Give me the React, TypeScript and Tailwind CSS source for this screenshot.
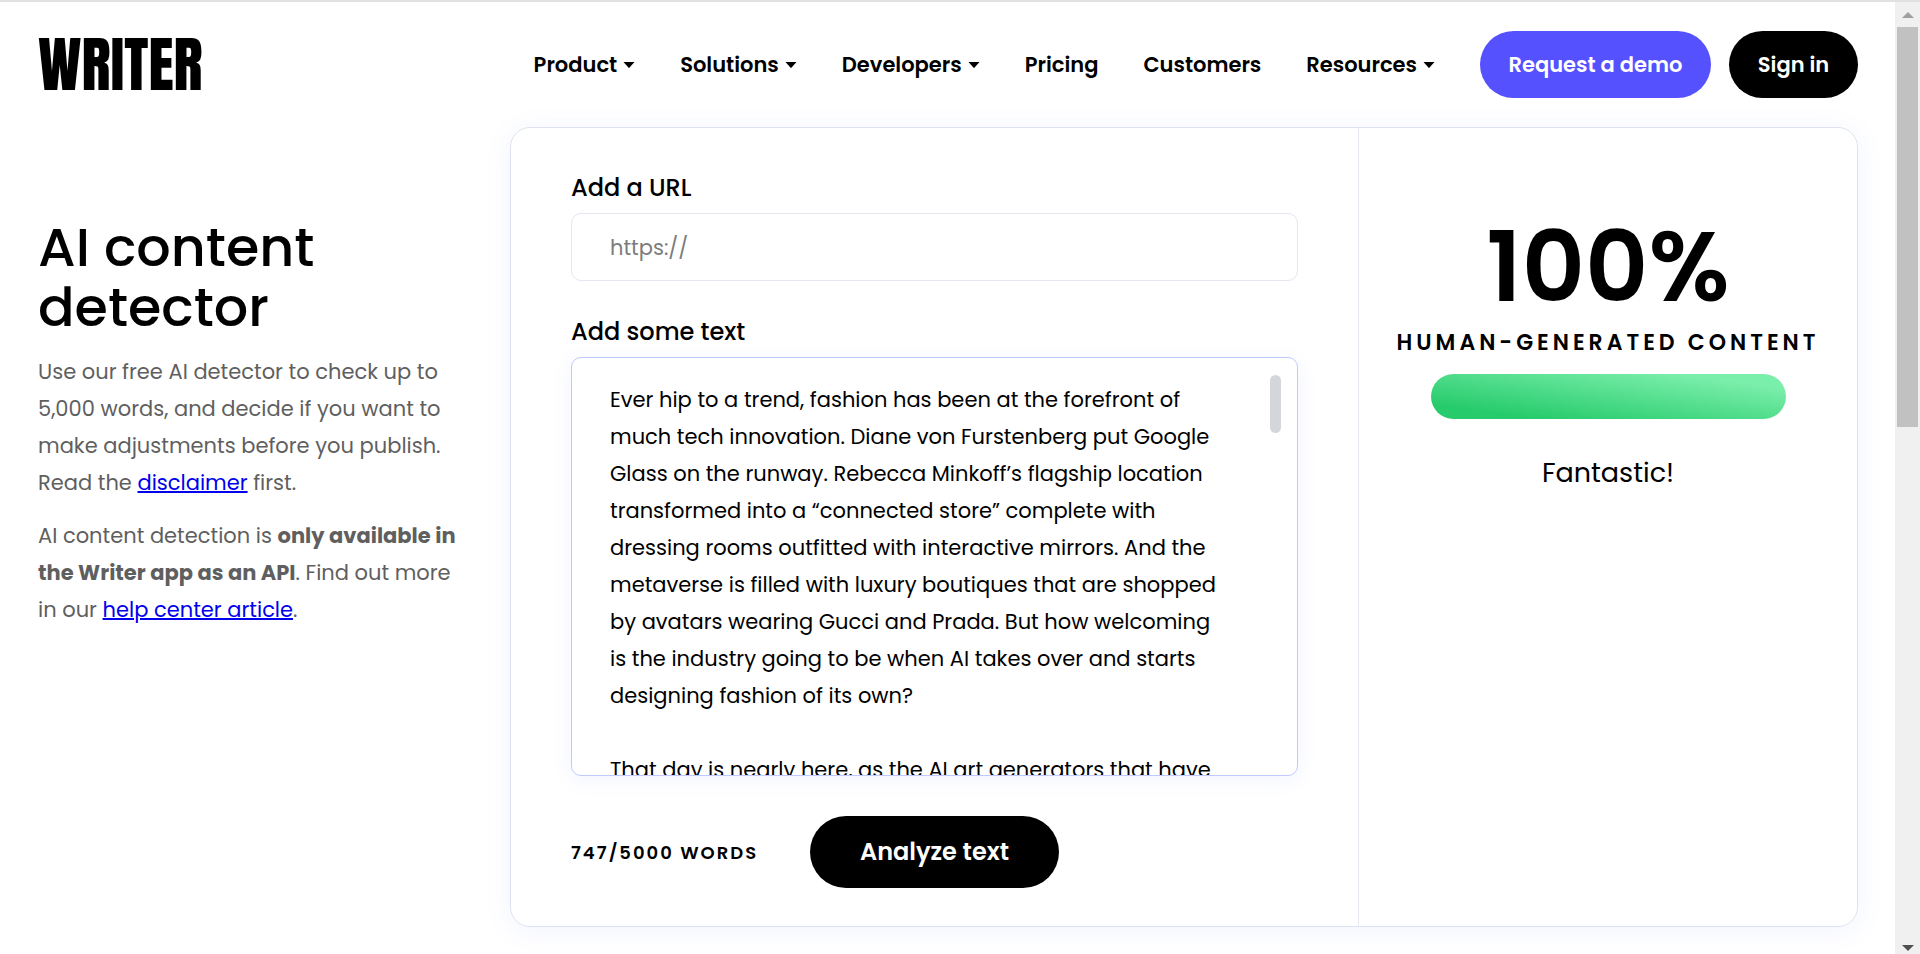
import { useState } from "react";

const navLinks = [
  { label: "Product", menu: true },
  { label: "Solutions", menu: true },
  { label: "Developers", menu: true },
  { label: "Pricing", menu: false },
  { label: "Customers", menu: false },
  { label: "Resources", menu: true },
];

const sampleText = [
  "Ever hip to a trend, fashion has been at the forefront of",
  "much tech innovation. Diane von Furstenberg put Google",
  "Glass on the runway. Rebecca Minkoff’s flagship location",
  "transformed into a “connected store” complete with",
  "dressing rooms outfitted with interactive mirrors. And the",
  "metaverse is filled with luxury boutiques that are shopped",
  "by avatars wearing Gucci and Prada. But how welcoming",
  "is the industry going to be when AI takes over and starts",
  "designing fashion of its own?",
  "",
  "That day is nearly here, as the AI art generators that have",
].join("\n");

function Caret() {
  return (
    <svg width="12" height="6" viewBox="0 0 12 6" aria-hidden="true">
      <path d="M0.5 0h11L6.6 5.6a0.8 0.8 0 0 1-1.2 0z" fill="currentColor" />
    </svg>
  );
}

function Header() {
  return (
    <header className="flex items-center justify-between pt-[29px]">
      <a
        href="#"
        className="font-['Anton','Roboto',sans-serif] text-[61px] leading-[67px] font-normal"
      >
        WRITER
      </a>
      <div className="flex items-center">
        <nav className="flex items-center gap-[45px] pr-[45px] text-[21px] font-semibold">
          {navLinks.map((link) => (
            <a key={link.label} href="#" className="flex items-center gap-1.5">
              {link.label}
              {link.menu && <Caret />}
            </a>
          ))}
        </nav>
        <div className="flex gap-[18px] text-[21px] font-semibold text-white">
          <a
            href="#"
            className="flex h-[67px] w-[231px] items-center justify-center rounded-full bg-[#5551ff]"
          >
            Request a demo
          </a>
          <a
            href="#"
            className="flex h-[67px] w-[129px] items-center justify-center rounded-full bg-black"
          >
            Sign in
          </a>
        </div>
      </div>
    </header>
  );
}

function Intro() {
  return (
    <section className="w-[472px] shrink-0 pt-[90px]">
      <h1 className="text-[54px] leading-[60px] font-medium">
        AI content
        <br />
        detector
      </h1>
      <div className="mt-4 flex flex-col gap-4 text-[21px] leading-[37px] text-[#5f5f5f]">
        <p>
          Use our free AI detector to check up to
          <br />
          5,000 words, and decide if you want to
          <br />
          make adjustments before you publish.
          <br />
          Read the{" "}
          <a href="#" className="text-[#0000ee] underline decoration-2">
            disclaimer
          </a>{" "}
          first.
        </p>
        <p>
          AI content detection is <b>only available in</b>
          <br />
          <b>the Writer app as an API</b>. Find out more
          <br />
          in our{" "}
          <a href="#" className="text-[#0000ee] underline decoration-2">
            help center article
          </a>
          .
        </p>
      </div>
    </section>
  );
}

function DetectorForm() {
  const [url, setUrl] = useState("");
  const [text, setText] = useState(sampleText);

  return (
    <form className="flex-1 border-r border-[#e4e7ed] px-[60px] pt-[41px] pb-[38px]">
      <label htmlFor="url" className="block text-[24px] leading-[38px] font-medium">
        Add a URL
      </label>
      <input
        id="url"
        type="text"
        placeholder="https://"
        value={url}
        onChange={(e) => setUrl(e.target.value)}
        className="mt-[6px] block h-[68px] w-full rounded-[10px] border border-[#e4e6f0] px-[38px] text-[21px] outline-none placeholder:text-[#7c7c7c]"
      />
      <label
        htmlFor="text"
        className="mt-[32px] block text-[24px] leading-[38px] font-medium"
      >
        Add some text
      </label>
      <div className="relative mt-[6px]">
        <textarea
          id="text"
          value={text}
          onChange={(e) => setText(e.target.value)}
          className="block h-[419px] w-full resize-none overflow-hidden rounded-[10px] border border-[#bfc9ff] px-[38px] pt-[23px] text-[21px] leading-[37px] whitespace-pre shadow-[0_4px_20px_rgba(85,110,255,0.08)] outline-none"
        />
        <div className="absolute top-[18px] right-[17px] h-[58px] w-[11px] rounded-full bg-[#d3d7dc]" />
      </div>
      <div className="mt-[40px] flex items-center">
        <p className="w-[239px] text-[18px] font-semibold tracking-[2px]">
          747/5000 WORDS
        </p>
        <button
          type="button"
          className="h-[72px] w-[249px] rounded-full bg-black text-[24px] font-semibold text-white"
        >
          Analyze text
        </button>
      </div>
    </form>
  );
}

function Score() {
  return (
    <section className="flex w-[498px] shrink-0 flex-col items-center pt-[89px]">
      <p className="text-[98px] leading-[100px] font-semibold">100%</p>
      <p className="mt-[10px] text-[22px] leading-[32px] font-semibold tracking-[4px] whitespace-nowrap">
        HUMAN-GENERATED CONTENT
      </p>
      <div className="mt-[15px] h-[45px] w-[355px] rounded-full bg-[linear-gradient(8deg,#26cb6b_15%,#7aeeab_84%)]" />
      <p className="mt-[36px] text-[27px] leading-[36px]">Fantastic!</p>
    </section>
  );
}

function Scrollbar() {
  return (
    <div className="flex w-[25px] shrink-0 flex-col items-center bg-[#f0f0f0] pt-[10px] pb-[3px]">
      <svg width="12" height="6" viewBox="0 0 12 6" aria-hidden="true">
        <path d="M6 0l6 6H0z" fill="#a0a0a0" />
      </svg>
      <div className="mt-[9px] h-[400px] w-[21px] bg-[#c1c1c1]" />
      <svg width="12" height="6" viewBox="0 0 12 6" className="mt-auto" aria-hidden="true">
        <path d="M0 0h12L6 6z" fill="#505050" />
      </svg>
    </div>
  );
}

export default function App() {
  return (
    <div className="flex min-h-screen border-t-2 border-[#e1e1e1] bg-white font-['Poppins','Inter',sans-serif] text-black">
      <div className="min-w-0 flex-1 pr-[37px] pb-[27px] pl-[38px]">
        <Header />
        <main className="mt-[29px] flex">
          <Intro />
          <div className="flex flex-1 rounded-[20px] border border-[#dfe2f0] shadow-[0_4px_28px_rgba(85,110,255,0.08)]">
            <DetectorForm />
            <Score />
          </div>
        </main>
      </div>
      <Scrollbar />
    </div>
  );
}
